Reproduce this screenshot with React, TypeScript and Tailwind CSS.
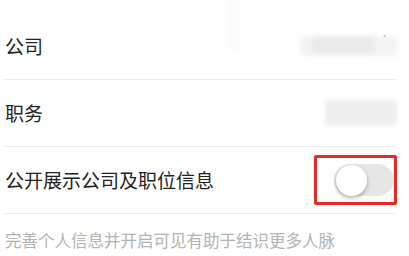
import { useState } from "react";

function Blur({ className }: { className: string }) {
  return <div className={`rounded-sm blur-[2px] ${className}`} />;
}

export default function App() {
  const [visible, setVisible] = useState(false);

  return (
    <main
      className="relative h-[256px] w-[409px] overflow-hidden bg-white"
      style={{ fontFamily: '"Noto Sans CJK SC", "Noto Sans", sans-serif' }}
    >
      {/* faint smudge at the top of the screenshot */}
      <div className="absolute left-[226px] top-0 h-[52px] w-[14px] bg-[#fbfbfb] blur-[3px]" />

      <div className="ml-1 mr-3 pt-[13px]">
        <div className="flex h-[67px] items-center justify-between border-b border-[#ededed]">
          <span className="pl-px text-[19px] text-[#222]">公司</span>
          <div className="relative flex h-[22px] w-[97px] items-center">
            <Blur className="h-[20px] w-[97px] bg-[#f3f3f3]" />
            <Blur className="absolute left-[12px] top-[2px] h-[16px] w-[62px] bg-[#eaeaea]" />
            <span className="absolute right-[9px] top-0 text-[10px] leading-none text-[#999]">`</span>
          </div>
        </div>

        <div className="flex h-[67px] items-center justify-between border-b border-[#ededed]">
          <span className="pl-px text-[19px] text-[#222]">职务</span>
          <Blur className="h-[26px] w-[72px] bg-[#eeeeee]" />
        </div>

        <div className="flex h-[67px] items-center justify-between border-b border-[#ededed]">
          <span className="pl-px text-[19px] text-[#222]">公开展示公司及职位信息</span>
          <div className="flex h-[50px] w-[83px] items-center justify-end rounded-[2px] border-[3px] border-[#e52a22]">
            <button
              onClick={() => setVisible(!visible)}
              className={`flex h-[32px] w-[60px] items-center rounded-full px-[2px] ${
                visible ? "justify-end bg-[#4cd964]" : "justify-start bg-[#e6e6e6]"
              }`}
            >
              <span className="block h-[31px] w-[31px] rounded-full bg-white shadow-[0_2px_4px_rgba(0,0,0,0.3)]" />
            </button>
          </div>
        </div>

        <p className="pl-px pt-[14px] text-[16.5px] leading-6 text-[#b3b3b3]">
          完善个人信息并开启可见有助于结识更多人脉
        </p>
      </div>
    </main>
  );
}
